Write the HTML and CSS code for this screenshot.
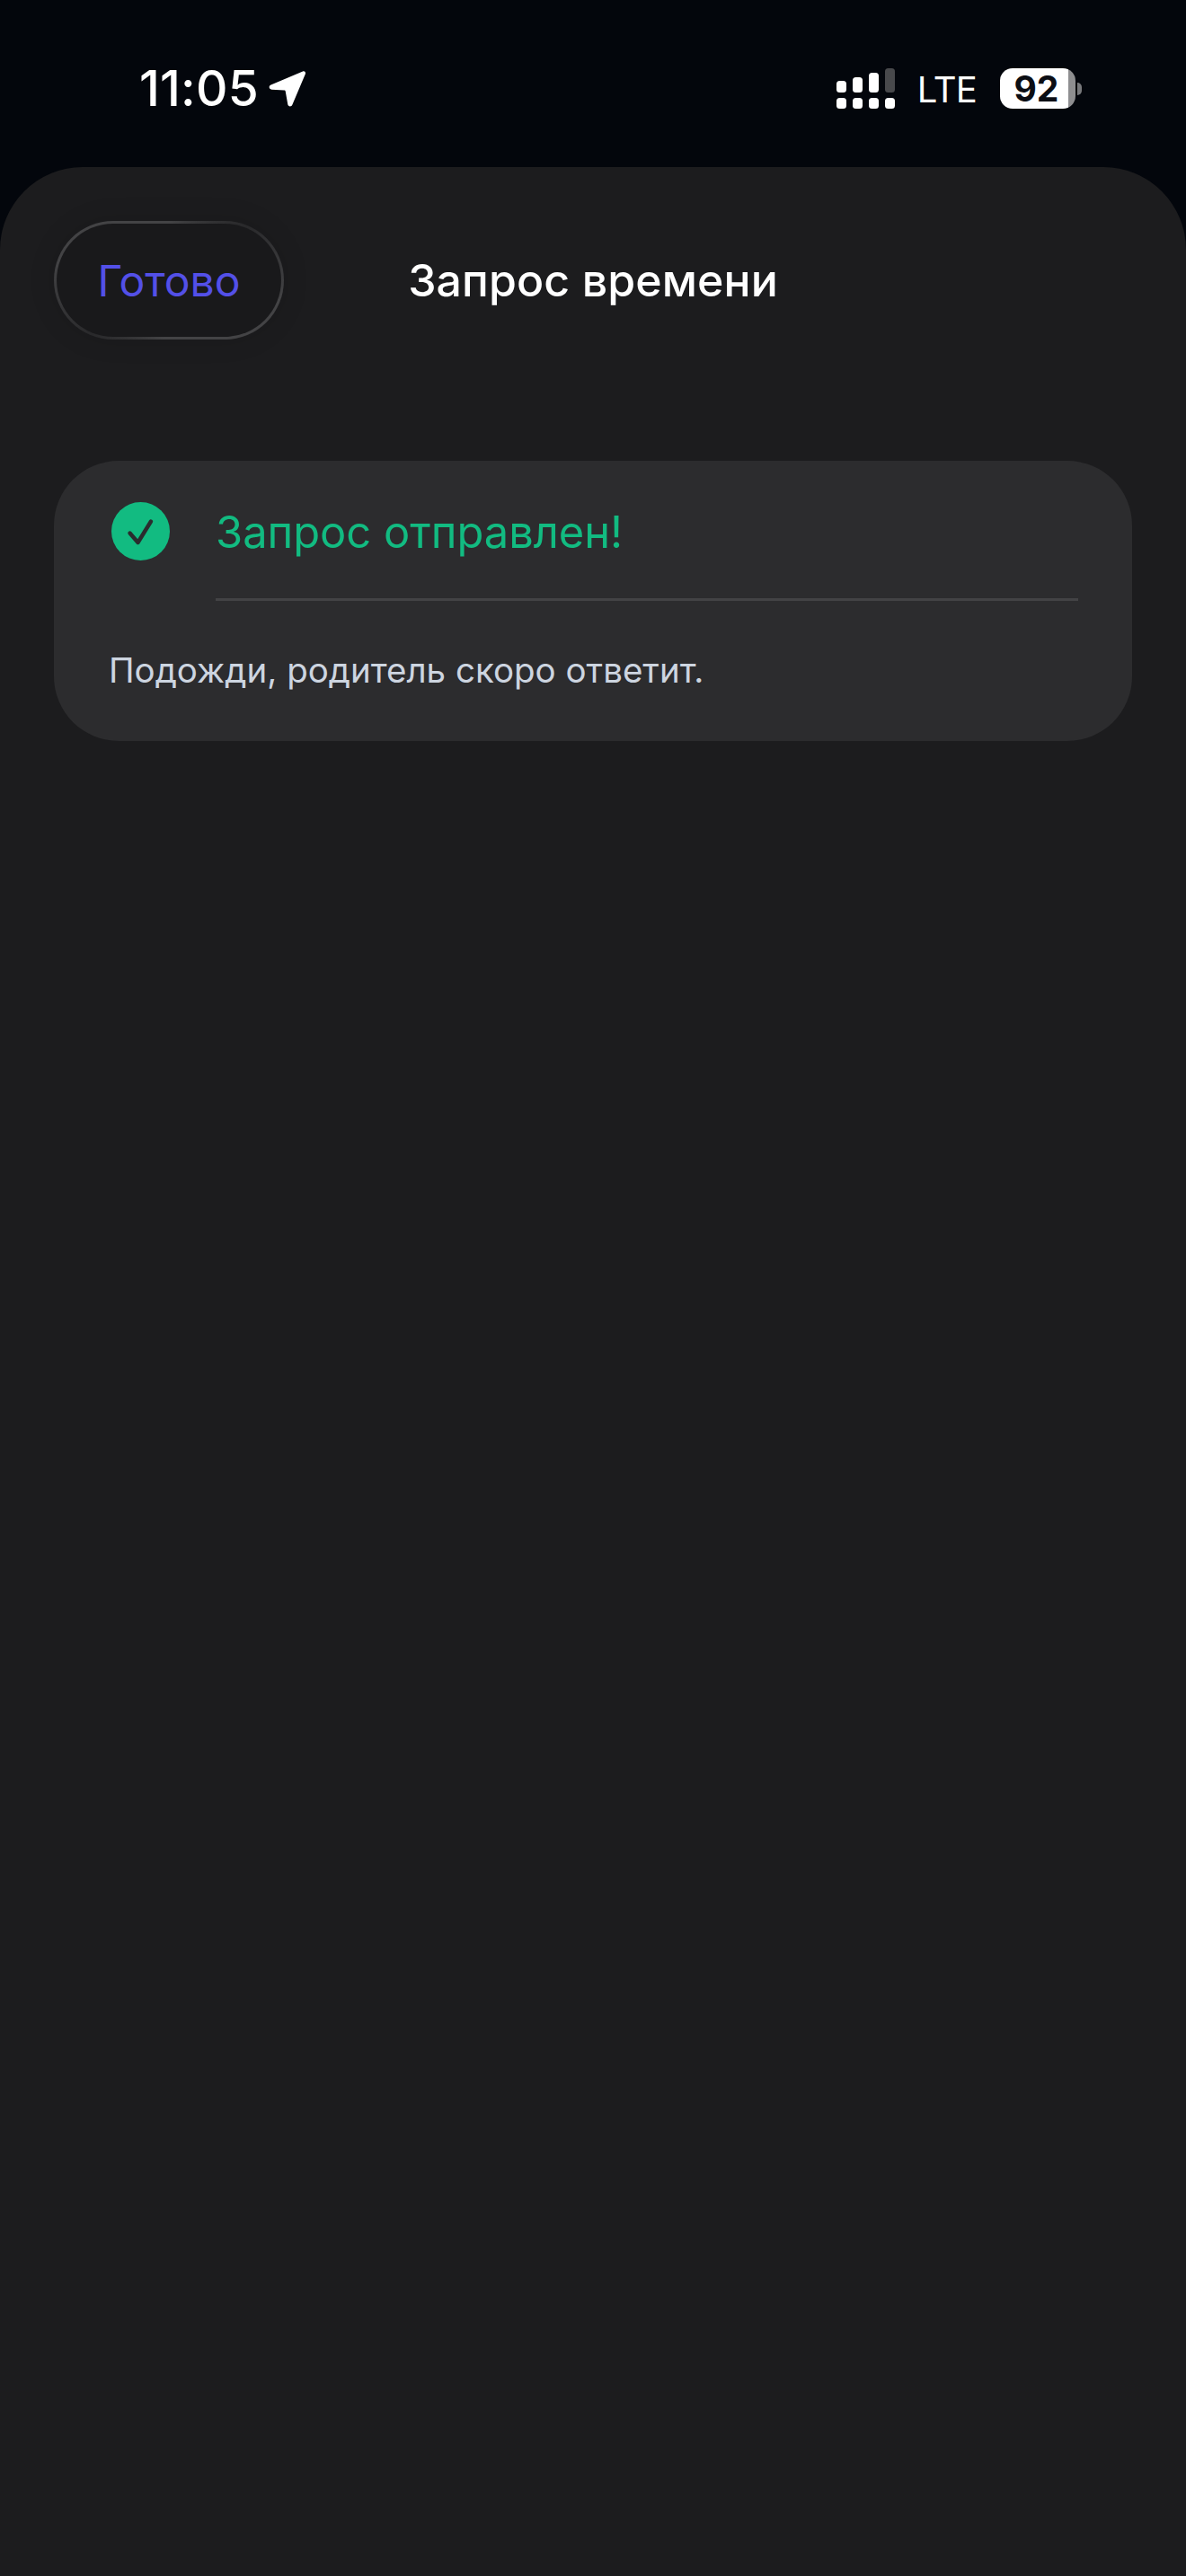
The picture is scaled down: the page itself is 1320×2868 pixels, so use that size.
FILE: index.html
```html
<!DOCTYPE html>
<html lang="ru">
<head>
  <meta charset="UTF-8">
  <meta name="viewport" content="width=device-width, initial-scale=1.0">
  <title>Запрос времени</title>
  <link rel="stylesheet" href="styles.css">
</head>
<body>
  <div class="status-bar">
    <div class="status-left">
      <span class="time">11:05</span>
      <svg class="location" viewBox="0 0 42 42" width="42" height="42">
        <path d="M39 2.5 3.5 17.5c-2.8 1.2-2.2 5 .8 5.2l14.2.8c.6 0 1.1.5 1.2 1.1l2.6 14.6c.5 2.6 4 3 5 .5L41.8 5.4c.8-2-1-3.7-2.8-2.9z" fill="#fff"/>
      </svg>
    </div>
    <div class="status-right">
      <svg class="signal" viewBox="0 0 66 46" width="66" height="46">
        <rect x="0" y="14" width="11" height="13" rx="3.5" fill="#fff"/>
        <rect x="18" y="10" width="11" height="17" rx="3.5" fill="#fff"/>
        <rect x="36" y="5" width="11" height="22" rx="3.5" fill="#fff"/>
        <rect x="54" y="0" width="11" height="27" rx="3.5" fill="#48494c"/>
        <rect x="0" y="33" width="11" height="12" rx="3.5" fill="#fff"/>
        <rect x="18" y="33" width="11" height="12" rx="3.5" fill="#fff"/>
        <rect x="36" y="33" width="11" height="12" rx="3.5" fill="#fff"/>
        <rect x="54" y="33" width="11" height="12" rx="3.5" fill="#fff"/>
      </svg>
      <span class="network">LTE</span>
      <div class="battery">
        <div class="battery-body"><span>92</span></div>
        <div class="battery-cap"></div>
      </div>
    </div>
  </div>

  <div class="sheet">
    <header class="sheet-header">
      <button class="done-btn">Готово</button>
      <h1 class="sheet-title">Запрос времени</h1>
    </header>

    <section class="card">
      <div class="card-top">
        <svg class="check" viewBox="0 0 65 65" width="65" height="65">
          <circle cx="32.5" cy="32.5" r="32.5" fill="#12bb81"/>
          <path d="M20.5 34.5 29.5 45 44 21.5" fill="none" stroke="#2a2c2e" stroke-width="4.4" stroke-linecap="round" stroke-linejoin="round"/>
        </svg>
        <div class="card-heading">Запрос отправлен!</div>
      </div>
      <p class="card-text">Подожди, родитель скоро ответит.</p>
    </section>
  </div>
</body>
</html>
```

FILE: styles.css
```css
* {
  margin: 0;
  padding: 0;
  box-sizing: border-box;
  font-family: Inter, 'Liberation Sans', sans-serif;
}

html, body {
  height: 100%;
}

body {
  display: flex;
  flex-direction: column;
  background-color: #03060c;
  overflow: hidden;
}

/* Status bar */
.status-bar {
  height: 186px;
  flex-shrink: 0;
  display: flex;
  justify-content: space-between;
  align-items: flex-start;
  padding: 72px 116px 0 155px;
  color: #fff;
}

.status-left {
  display: flex;
  align-items: center;
  gap: 10px;
}

.time {
  font-size: 55px;
  font-weight: 500;
  line-height: 52px;
  letter-spacing: 0.2px;
}

.location {
  display: block;
}

.status-right {
  display: flex;
  align-items: center;
  margin-top: 2px;
}

.signal {
  display: block;
}

.network {
  margin-left: 24px;
  padding-top: 3px;
  font-size: 40px;
  line-height: 46px;
  font-weight: 400;
  letter-spacing: -0.8px;
}

.battery {
  display: flex;
  align-items: center;
  margin-left: 26px;
}

.battery-body {
  width: 84px;
  height: 45px;
  border-radius: 14px;
  background: linear-gradient(to right, #fff 91%, #8e8e90 91%);
  display: flex;
  align-items: center;
  justify-content: center;
}

.battery-body span {
  font-size: 39px;
  font-weight: 700;
  color: #0c0e14;
  line-height: 45px;
  margin-right: 3px;
}

.battery-cap {
  width: 5px;
  height: 14px;
  margin-left: 2px;
  border-radius: 0 7px 7px 0;
  background-color: #77787b;
}

/* Sheet */
.sheet {
  flex: 1;
  background-color: #1c1c1e;
  border-radius: 92px 92px 0 0;
  padding: 60px 60px 0;
}

.sheet-header {
  position: relative;
  height: 132px;
  display: flex;
  align-items: center;
  justify-content: center;
}

.done-btn {
  position: absolute;
  left: 0;
  top: 0;
  width: 256px;
  height: 132px;
  border-radius: 66px;
  border: 3px solid transparent;
  background:
    linear-gradient(#19191b, #19191b) padding-box,
    conic-gradient(#434345 0deg, #29292b 55deg, #434345 100deg, #434345 170deg, #434345 185deg, #29292b 235deg, #434345 280deg, #434345 360deg) border-box;
  box-shadow: 0 0 30px rgba(0, 0, 0, 0.12);
  color: #5350e8;
  font-size: 48px;
  font-weight: 400;
}

.sheet-title {
  font-size: 50px;
  font-weight: 500;
  letter-spacing: 0.1px;
  color: #fff;
}

.card {
  margin-top: 135px;
  height: 312px;
  background-color: #2c2c2e;
  border-radius: 72px;
  padding: 46px 60px 0 61px;
}

.card-top {
  display: flex;
  gap: 51px;
}

.check {
  display: block;
  flex-shrink: 0;
  margin: 0 0 0 3px;
}

.card-heading {
  flex: 1;
  height: 110px;
  padding-top: 6px;
  border-bottom: 3px solid #434345;
  font-size: 48.8px;
  line-height: 56px;
  color: #12bb81;
}

.card-text {
  margin-top: 53px;
  font-size: 38.5px;
  line-height: 48px;
  color: #cdd5e0;
}
```
